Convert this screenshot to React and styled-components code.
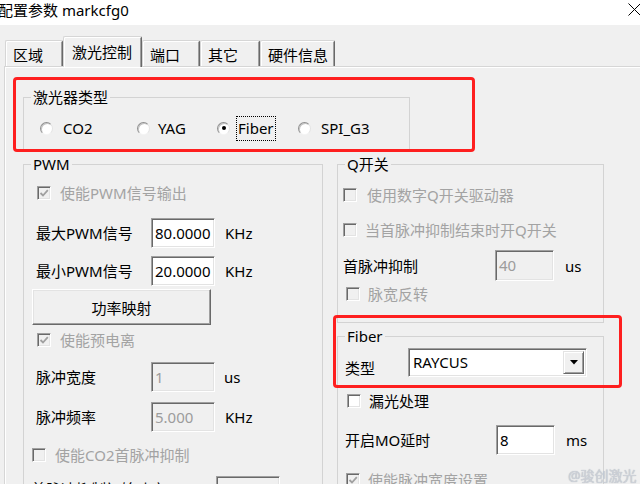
import React from 'react';
import styled, { createGlobalStyle } from 'styled-components';

const FONT = `"Noto Sans", "Noto Sans CJK SC", sans-serif`;

const Global = createGlobalStyle`
  html, body { margin: 0; padding: 0; background: #f0f0f0; overflow: hidden; }
  body { font-family: ${FONT}; font-size: 15px; color: #000; }
  * { box-sizing: border-box; }
`;

const Window = styled.div`
  position: relative;
  width: 640px;
  height: 484px;
  overflow: hidden;
  background: #f0f0f0;
  display: flex;
  flex-direction: column;
`;

const TitleBar = styled.div`
  height: 25px;
  flex: none;
  background: #fff;
  display: flex;
  justify-content: space-between;
  align-items: flex-start;
`;

const Title = styled.div`
  margin-left: -2px;
  line-height: 20px;
  white-space: nowrap;
`;

const CloseSvg = styled.svg`
  margin: 3px -1px 0 0;
  flex: none;
`;

const TabStrip = styled.div`
  position: relative;
  z-index: 1;
  height: 41px;
  flex: none;
  display: flex;
  align-items: flex-end;
  padding-left: 5px;
`;

const Tab = styled.div`
  width: ${p => p.$w}px;
  height: ${p => (p.$active ? 31 : 26)}px;
  margin-bottom: ${p => (p.$active ? -1 : 0)}px;
  padding: ${p => (p.$active ? '5px 0 0 8px' : '4px 0 0 7px')};
  line-height: 20px;
  white-space: nowrap;
  background: #f0f0f0;
  border-top: 1px solid #d6d6d6;
  border-left: 1px solid #d6d6d6;
  border-right: 1px solid #696969;
  border-radius: 2px 2px 0 0;
  box-shadow: inset 1px 1px 0 #fff, inset -1px 0 0 #a0a0a0;
`;

const Panel = styled.div`
  flex: 1;
  margin-left: 4px;
  border-top: 1px solid #d6d6d6;
  border-left: 1px solid #d6d6d6;
  box-shadow: inset 1px 1px 0 #fff;
  padding: 21px 0 0 18px;
`;

const Group = styled.fieldset`
  margin: 0;
  padding: 0;
  min-width: 0;
  width: ${p => p.$w}px;
  height: ${p => p.$h}px;
  flex: none;
  border: 1px solid #d3d3d3;
`;

const Legend = styled.legend`
  margin-left: 7px;
  padding: 0 2px;
  line-height: 18px;
  font-size: 15px;
`;

const RadioRow = styled.div`
  display: flex;
  align-items: center;
  height: 24px;
  margin: 10px 0 0 16px;
`;

const RadioItem = styled.label`
  display: flex;
  align-items: center;
  gap: ${p => p.$gap ?? 8}px;
  width: ${p => (p.$w ? `${p.$w}px` : 'auto')};
  flex: none;
`;

const RadioDot = styled.span`
  width: 13px;
  height: 13px;
  flex: none;
  border-radius: 50%;
  background: #fff;
  border: 1px solid;
  border-color: #8f8f8f #e3e3e3 #f4f4f4 #8f8f8f;
  box-shadow: inset 1px 1px 0 #c4c4c4;
  display: flex;
  align-items: center;
  justify-content: center;
  &::after {
    content: '';
    display: ${p => (p.$checked ? 'block' : 'none')};
    width: 4px;
    height: 4px;
    border-radius: 50%;
    background: #000;
  }
`;

const RadioText = styled.span`
  line-height: 23px;
  padding: 0 1px;
  border: 1px dotted ${p => (p.$focus ? '#000' : 'transparent')};
`;

const Columns = styled.div`
  display: flex;
  gap: 14px;
  margin-top: 5px;
`;

const RightCol = styled.div`
  display: flex;
  flex-direction: column;
  gap: 4px;
`;

const CheckRow = styled.label`
  display: flex;
  align-items: center;
  height: 20px;
  margin-top: ${p => p.$mt}px;
  margin-left: ${p => p.$ml}px;
  gap: ${p => p.$gap ?? 9}px;
  white-space: nowrap;
`;

const Box = styled.span`
  width: 14px;
  height: 14px;
  flex: none;
  border: 1px solid;
  border-color: #a0a0a0 #fff #fff #a0a0a0;
  box-shadow: inset 1px 1px 0 #696969, inset -1px -1px 0 #e3e3e3;
  background: ${p => (p.$disabled ? '#f0f0f0' : '#fff')};
  display: flex;
  align-items: center;
  justify-content: center;
`;

const Text = styled.span`
  line-height: 20px;
  white-space: nowrap;
  color: ${p => (p.$disabled ? '#a3a3a3' : '#000')};
`;

const FieldRow = styled.div`
  display: flex;
  align-items: center;
  height: ${p => p.$h ?? 30}px;
  margin-top: ${p => p.$mt}px;
  margin-left: ${p => p.$ml}px;
  white-space: nowrap;
`;

const FieldLabel = styled.span`
  width: ${p => p.$w}px;
  flex: none;
  line-height: 20px;
  align-self: ${p => (p.$top !== undefined ? 'flex-start' : 'center')};
  margin-top: ${p => p.$top ?? 0}px;
`;

const TextBox = styled.div`
  width: ${p => p.$w}px;
  height: 100%;
  flex: none;
  padding: 3px 0 0 3px;
  line-height: 22px;
  border: 1px solid;
  border-color: #a0a0a0 #fff #fff #a0a0a0;
  box-shadow: inset 1px 1px 0 #696969, inset -1px -1px 0 #e3e3e3;
  background: ${p => (p.$disabled ? '#f0f0f0' : '#fff')};
  color: ${p => (p.$disabled ? '#9c9c9c' : '#000')};
`;

const Unit = styled.span`
  margin-left: ${p => p.$ml ?? 10}px;
  line-height: 20px;
`;

const Button = styled.div`
  width: 179px;
  height: 36px;
  margin: 3px 0 0 8px;
  display: flex;
  align-items: center;
  justify-content: center;
  border: 1px solid;
  border-color: #fff #696969 #696969 #fff;
  box-shadow: inset -1px -1px 0 #a0a0a0, inset 1px 1px 0 #e3e3e3;
  background: #f0f0f0;
`;

const Combo = styled.div`
  width: 179px;
  height: 100%;
  flex: none;
  display: flex;
  padding: 2px;
  border: 1px solid;
  border-color: #a0a0a0 #fff #fff #a0a0a0;
  box-shadow: inset 1px 1px 0 #696969, inset -1px -1px 0 #e3e3e3;
  background: #fff;
`;

const ComboText = styled.span`
  flex: 1;
  padding-left: 2px;
  line-height: 23px;
`;

const ComboButton = styled.span`
  width: 21px;
  flex: none;
  display: flex;
  align-items: center;
  justify-content: center;
  background: #f0f0f0;
  border: 1px solid;
  border-color: #e3e3e3 #696969 #696969 #e3e3e3;
  box-shadow: inset 1px 1px 0 #fff, inset -1px -1px 0 #a0a0a0;
`;

const Highlight = styled.div`
  position: absolute;
  pointer-events: none;
  left: ${p => p.$x}px;
  top: ${p => p.$y}px;
  width: ${p => p.$w}px;
  height: ${p => p.$h}px;
  border: 3px solid #fe1f1f;
  border-radius: 4px;
`;

const Watermark = styled.div`
  position: absolute;
  left: 568px;
  top: 466px;
  font-size: 14px;
  line-height: 20px;
  color: #cdd1d8;
  text-shadow: 0 0 1px #aab0b9;
  pointer-events: none;
`;

const Check = ({ color = '#a0a0a0' }) => (
  <svg width="10" height="10" viewBox="0 0 10 10">
    <polyline points="1.5,5 4,7.5 8.8,2.2" fill="none" stroke={color} strokeWidth="1.8" />
  </svg>
);

const CheckBox = ({ checked, disabled, children, mt, ml, gap }) => (
  <CheckRow $mt={mt} $ml={ml} $gap={gap}>
    <Box $disabled={disabled}>{checked && <Check color={disabled ? '#a0a0a0' : '#000'} />}</Box>
    <Text $disabled={disabled}>{children}</Text>
  </CheckRow>
);

export default function App() {
  return (
    <>
      <Global />
      <Window>
        <TitleBar>
          <Title>配置参数 markcfg0</Title>
          <CloseSvg width="13" height="13" viewBox="0 0 13 13">
            <path d="M0.5 0.5 L12.5 12.5 M12.5 0.5 L0.5 12.5" stroke="#000" strokeWidth="1" />
          </CloseSvg>
        </TitleBar>

        <TabStrip>
          <Tab $w={58}>区域</Tab>
          <Tab $w={79} $active>激光控制</Tab>
          <Tab $w={58}>端口</Tab>
          <Tab $w={60}>其它</Tab>
          <Tab $w={75}>硬件信息</Tab>
        </TabStrip>

        <Panel>
          <Group $w={387} $h={62}>
            <Legend>激光器类型</Legend>
            <RadioRow>
              <RadioItem $w={97}><RadioDot /><RadioText>CO2</RadioText></RadioItem>
              <RadioItem $w={80} $gap={6}><RadioDot /><RadioText>YAG</RadioText></RadioItem>
              <RadioItem $w={81} $gap={6}><RadioDot $checked /><RadioText $focus>Fiber</RadioText></RadioItem>
              <RadioItem><RadioDot /><RadioText>SPI_G3</RadioText></RadioItem>
            </RadioRow>
          </Group>

          <Columns>
            <Group $w={300} $h={340}>
              <Legend>PWM</Legend>
              <CheckBox checked disabled mt={10} ml={13}>使能PWM信号输出</CheckBox>
              <FieldRow $mt={15} $ml={12}>
                <FieldLabel $w={115}>最大PWM信号</FieldLabel>
                <TextBox $w={64}>80.0000</TextBox>
                <Unit>KHz</Unit>
              </FieldRow>
              <FieldRow $mt={8} $ml={12}>
                <FieldLabel $w={115}>最小PWM信号</FieldLabel>
                <TextBox $w={64}>20.0000</TextBox>
                <Unit>KHz</Unit>
              </FieldRow>
              <Button>功率映射</Button>
              <CheckBox checked disabled mt={5} ml={13}>使能预电离</CheckBox>
              <FieldRow $mt={12} $ml={12}>
                <FieldLabel $w={115}>脉冲宽度</FieldLabel>
                <TextBox $w={64} $disabled>1</TextBox>
                <Unit $ml={9}>us</Unit>
              </FieldRow>
              <FieldRow $mt={10} $ml={12}>
                <FieldLabel $w={115}>脉冲频率</FieldLabel>
                <TextBox $w={64} $disabled>5.000</TextBox>
                <Unit>KHz</Unit>
              </FieldRow>
              <CheckBox disabled mt={13} ml={8}>使能CO2首脉冲抑制</CheckBox>
              <FieldRow $mt={11} $ml={7}>
                <FieldLabel $w={185} $top={3}>首脉冲抑制初始功率</FieldLabel>
                <TextBox $w={64} $disabled>10.0</TextBox>
              </FieldRow>
            </Group>

            <RightCol>
              <Group $w={267} $h={168}>
                <Legend>Q开关</Legend>
                <CheckBox disabled mt={12} ml={5} gap={10}>使用数字Q开关驱动器</CheckBox>
                <CheckBox disabled mt={15} ml={5} gap={8}>当首脉冲抑制结束时开Q开关</CheckBox>
                <FieldRow $mt={10} $ml={5} $h={31}>
                  <FieldLabel $w={152}>首脉冲抑制</FieldLabel>
                  <TextBox $w={59} $disabled>40</TextBox>
                  <Unit $ml={11}>us</Unit>
                </FieldRow>
                <CheckBox disabled mt={3} ml={8} gap={8}>脉宽反转</CheckBox>
              </Group>

              <Group $w={267} $h={200}>
                <Legend>Fiber</Legend>
                <FieldRow $mt={3} $ml={7} $h={29}>
                  <FieldLabel $w={63} $top={10}>类型</FieldLabel>
                  <Combo>
                    <ComboText>RAYCUS</ComboText>
                    <ComboButton>
                      <svg width="8" height="5" viewBox="0 0 8 5">
                        <path d="M0 0 H8 L4 4.5 Z" fill="#000" />
                      </svg>
                    </ComboButton>
                  </Combo>
                </FieldRow>
                <CheckBox mt={14} ml={9} gap={8}>漏光处理</CheckBox>
                <FieldRow $mt={14} $ml={7}>
                  <FieldLabel $w={151}>开启MO延时</FieldLabel>
                  <TextBox $w={59}>8</TextBox>
                  <Unit $ml={11}>ms</Unit>
                </FieldRow>
                <CheckBox checked disabled mt={15} ml={8} gap={8}>使能脉冲宽度设置</CheckBox>
              </Group>
            </RightCol>
          </Columns>
        </Panel>

        <Highlight $x={13} $y={77} $w={462} $h={75} />
        <Highlight $x={333} $y={315} $w={289} $h={73} />
        <Watermark>@骏创激光</Watermark>
      </Window>
    </>
  );
}
